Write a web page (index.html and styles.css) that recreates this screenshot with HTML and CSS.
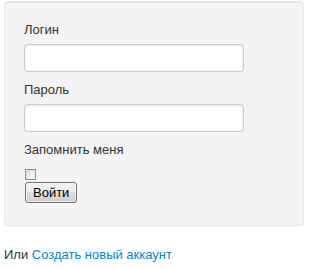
FILE: index.html
```html
<!DOCTYPE html>
<html lang="ru">
<head>
<meta charset="utf-8">
<title>Вход</title>
<link rel="stylesheet" href="styles.css">
</head>
<body>
<div class="page">
  <form class="well">
    <label class="field-label" for="login">Логин</label>
    <input class="text-input" id="login" type="text">
    <label class="field-label" for="password">Пароль</label>
    <input class="text-input" id="password" type="password">
    <label class="field-label" for="remember">Запомнить меня</label>
    <input class="check" id="remember" type="checkbox">
    <button class="btn" type="button">Войти</button>
  </form>
  <p class="alt">Или <a class="link" href="#">Создать новый аккаунт</a></p>
</div>
</body>
</html>
```

FILE: styles.css
```css
html, body {
  margin: 0;
  padding: 0;
  background: #fff;
}

body {
  font-family: "Liberation Sans", Arial, sans-serif;
  font-size: 13px;
  line-height: 18px;
  color: #333;
}

.page {
  padding: 1px 12px 0 4px;
}

.well {
  box-sizing: border-box;
  width: 300px;
  margin: 0 0 20px;
  padding: 19px;
  background-color: #f4f4f4;
  border: 1px solid #e6e6e6;
  border-radius: 4px;
  box-shadow: inset 0 1px 1px rgba(0, 0, 0, 0.05);
}

.field-label {
  display: block;
  margin-bottom: 5px;
  color: #333;
}

.text-input {
  display: block;
  box-sizing: content-box;
  width: 210px;
  height: 18px;
  padding: 4px;
  margin: 0 0 9px;
  font-family: inherit;
  font-size: 13px;
  line-height: 18px;
  color: #555;
  background: #fff;
  border: 1px solid #ccc;
  border-radius: 3px;
  box-shadow: inset 0 1px 3px rgba(0, 0, 0, 0.1);
  outline: none;
}

.check {
  -webkit-appearance: none;
  appearance: none;
  display: block;
  box-sizing: border-box;
  width: 11px;
  height: 11px;
  margin: 10px 0 0 1px;
  padding: 0;
  border: 1px solid #8e8f8f;
  background: linear-gradient(135deg, #d9d9d9 0%, #f1f1f1 70%, #fafafa 100%);
}

.btn {
  -webkit-appearance: none;
  appearance: none;
  display: block;
  box-sizing: border-box;
  height: 21px;
  margin: 2px 0 3px 1px;
  padding: 0 7px;
  font-family: "Liberation Sans", Arial, sans-serif;
  font-size: 13px;
  line-height: 19px;
  color: #000;
  border: 1px solid #707070;
  border-radius: 3px;
  background: linear-gradient(#f2f2f2 0%, #ebebeb 50%, #dddddd 50%, #cfcfcf 100%);
  box-shadow: inset 0 0 0 1px rgba(255, 255, 255, 0.6);
}

.alt {
  margin: 0;
  color: #333;
}

.link {
  color: #0088cc;
  text-decoration: none;
}
```
